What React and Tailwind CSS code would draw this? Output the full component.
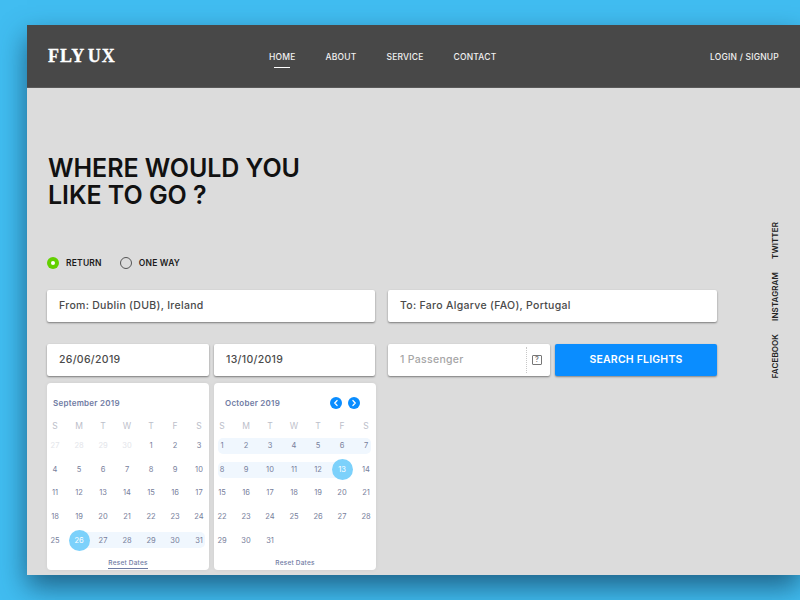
import React from "react";

const WEEK = ["S", "M", "T", "W", "T", "F", "S"];

function range(a, b) {
  const out = [];
  for (let i = a; i <= b; i++) out.push(i);
  return out;
}

const sepRows = [
  { cells: [27, 28, 29, 30, 1, 2, 3], faded: 4 },
  { cells: range(4, 10) },
  { cells: range(11, 17) },
  { cells: range(18, 24) },
  { cells: range(25, 31), selected: 1, pill: "left-[32px] right-[2px]" },
];

const octRows = [
  { cells: range(1, 7), pill: "left-[4px] right-[3px]" },
  { cells: range(8, 14), selected: 5, pill: "left-[4px] right-[30px]" },
  { cells: range(15, 21) },
  { cells: range(22, 28) },
  { cells: [29, 30, 31] },
];

function CalendarRow({ row }) {
  return (
    <div className="relative h-[23.6px] flex items-center">
      {row.pill && <div className={"absolute top-[4px] h-[16px] rounded-[5px] bg-[#f0f7fe] " + row.pill} />}
      <div className="relative grid grid-cols-[repeat(7,16px)] gap-x-[8px] w-full">
        {row.cells.map((d, i) => {
          if (row.selected === i) {
            return (
              <div key={i} className="relative h-[16px] flex items-center justify-center text-white">
                <span className="absolute w-[21px] h-[21px] rounded-full bg-[#7cd1fb]" />
                <span className="relative">{d}</span>
              </div>
            );
          }
          const cls = row.faded && i < row.faded ? "text-[#e3e5ea]" : "text-[#777e9b]";
          return (
            <div key={i} className={"h-[16px] flex items-center justify-center " + cls}>
              {d}
            </div>
          );
        })}
      </div>
    </div>
  );
}

function Calendar({ title, rows, nav, underline }) {
  return (
    <div className="w-[162px] h-[187px] rounded-[4px] bg-white shadow-[0_0_4px_rgba(0,0,0,0.06)] pr-[2px] flex flex-col text-[7.5px] font-normal">
      <div className={"mt-[1px] h-[38px] flex items-center justify-between text-[8px] font-semibold tracking-[0.25px] text-[#6f7ba3] " + (nav ? "pl-[11px] pr-[14px]" : "pl-[6px] pr-[6px]")}>
        <span>{title}</span>
        {nav && (
          <span className="flex gap-[6.5px]">
            <span className="w-[12px] h-[12px] rounded-full bg-[#0a8dff] flex items-center justify-center">
              <svg width="8" height="8" viewBox="0 0 8 8" fill="none" stroke="#fff" strokeWidth="1.4" strokeLinecap="round" strokeLinejoin="round">
                <path d="M5 1.6 L2.8 4 L5 6.4" />
              </svg>
            </span>
            <span className="w-[12px] h-[12px] rounded-full bg-[#0a8dff] flex items-center justify-center">
              <svg width="8" height="8" viewBox="0 0 8 8" fill="none" stroke="#fff" strokeWidth="1.4" strokeLinecap="round" strokeLinejoin="round">
                <path d="M3 1.6 L5.2 4 L3 6.4" />
              </svg>
            </span>
          </span>
        )}
      </div>
      <div className="grid grid-cols-[repeat(7,16px)] gap-x-[8px] h-[6px] items-center text-[8.5px] leading-none font-normal text-[#bcc0ca] mb-[6px]">
        {WEEK.map((w, i) => (
          <div key={i} className="text-center">{w}</div>
        ))}
      </div>
      {rows.map((r, i) => (
        <CalendarRow key={i} row={r} />
      ))}
      <div className="mt-[6px] flex justify-center pl-[2px]">
        <span className={"text-[6.5px] font-medium tracking-[0.2px] text-[#6f7ba3] leading-[10px] " + (underline ? "border-b border-[#6f7ba3]" : "")}>
          Reset Dates
        </span>
      </div>
    </div>
  );
}

function Field({ children, className = "" }) {
  return (
    <div className={"h-[32px] rounded-[2px] bg-white shadow-[0_1px_2px_rgba(0,0,0,0.45)] flex items-center px-[12px] text-[10.5px] font-medium tracking-[0.3px] text-[#4a4a4a] " + className}>
      {children}
    </div>
  );
}

export default function App() {
  return (
    <div className="w-[800px] h-[600px] overflow-hidden bg-[#41bdf1] pl-[27px] pt-[25px] font-['Inter',sans-serif]">
      <div className="w-[773px] h-[550px] bg-[#dcdcdc] shadow-[0_12px_26px_rgba(15,60,90,0.7)] flex flex-col">
        <header className="h-[63px] shrink-0 bg-[#484848] border-b border-[#5a5a5a] flex items-center pl-[21px] pr-[21px] text-white">
          <div className="w-[221px] font-['Liberation_Serif',serif] font-bold text-[18px] tracking-[0.9px] [word-spacing:-2px] [-webkit-text-stroke:0.3px_white] leading-none whitespace-pre">
            FLY UX
          </div>
          <nav className="flex text-[8.5px] font-medium tracking-[0.2px] text-[#f1f1f1] gap-[30px] mt-[2px]">
            <span className="relative">
              HOME
              <span className="absolute left-[5px] right-[6px] top-[16px] h-px bg-white" />
            </span>
            <span>ABOUT</span>
            <span>SERVICE</span>
            <span>CONTACT</span>
          </nav>
          <span className="ml-auto mt-[2px] text-[8.5px] font-medium tracking-[0.2px] text-[#f1f1f1]">LOGIN / SIGNUP</span>
        </header>

        <main className="flex flex-1 pl-[20px]">
          <div className="w-[670px]">
            <h1 className="mt-[67px] pl-[1px] text-[25px] leading-[27px] font-semibold tracking-[-0.05px] text-[#111]">
              WHERE WOULD YOU
              <br />
              LIKE TO GO ?
            </h1>

            <div className="mt-[46px] h-[16px] flex items-center text-[8.5px] font-semibold tracking-[0.2px] text-[#1c1c1c]">
              <span className="w-[12px] h-[12px] rounded-full bg-[#63d000] flex items-center justify-center">
                <span className="w-[4px] h-[4px] rounded-full bg-white" />
              </span>
              <span className="ml-[7px]">RETURN</span>
              <span className="ml-[18px] w-[12px] h-[12px] rounded-full border border-[#555]" />
              <span className="ml-[7px]">ONE WAY</span>
            </div>

            <div className="mt-[19px] flex gap-[13px]">
              <Field className="w-[328px]">From: Dublin (DUB), Ireland</Field>
              <Field className="w-[329px]">To: Faro Algarve (FAO), Portugal</Field>
            </div>

            <div className="mt-[22px] flex gap-[13px]">
              <div className="w-[328px] flex gap-[5px]">
                <Field className="w-[162px]">26/06/2019</Field>
                <Field className="w-[161px]">13/10/2019</Field>
              </div>
              <div className="w-[329px] flex gap-[5px]">
                <Field className="w-[162px] text-[#a6a6a6] pr-[8px]">
                  <span>1 Passenger</span>
                  <span className="ml-auto h-[26px] border-l border-dotted border-[#c8c8c8]" />
                  <span className="ml-[5px] w-[10px] h-[10px] border border-[#777] rounded-[1px] flex items-center justify-center text-[7px] font-semibold text-[#777] tracking-normal">
                    ?
                  </span>
                </Field>
                <button className="w-[162px] h-[32px] rounded-[2px] bg-[#0a8dff] shadow-[0_1px_2px_rgba(0,0,0,0.4)] text-white text-[10.5px] font-semibold tracking-[0.2px]">
                  SEARCH FLIGHTS
                </button>
              </div>
            </div>

            <div className="mt-[7px] flex gap-[5px]">
              <Calendar title="September 2019" rows={sepRows} underline />
              <Calendar title="October 2019" rows={octRows} nav />
            </div>
          </div>

          <aside className="ml-[46px] pt-[134px] flex flex-col items-center gap-[13px] text-[8px] font-semibold tracking-[0.1px] text-[#222] w-[24px]">
            <span className="[writing-mode:vertical-rl] rotate-180">TWITTER</span>
            <span className="[writing-mode:vertical-rl] rotate-180">INSTAGRAM</span>
            <span className="[writing-mode:vertical-rl] rotate-180">FACEBOOK</span>
          </aside>
        </main>
      </div>
    </div>
  );
}
